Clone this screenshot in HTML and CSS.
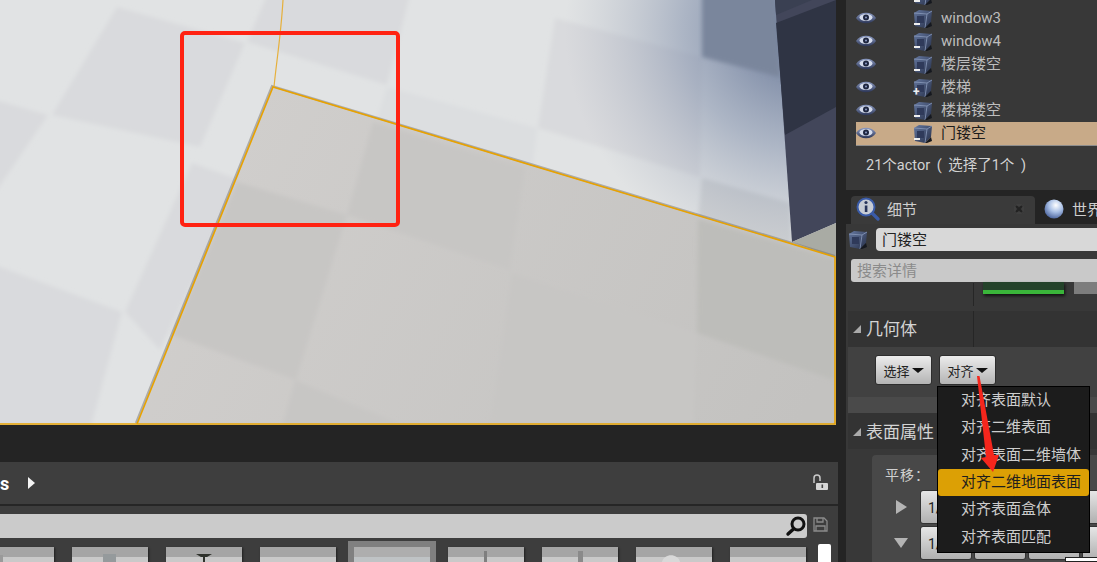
FILE: index.html
```html
<!DOCTYPE html>
<html lang="zh-CN">
<head>
    <meta charset="UTF-8">
    <meta name="viewport" content="width=device-width, initial-scale=1.0">
    <title>关卡编辑器</title>
    <link rel="stylesheet" href="styles.css">
</head>
<body>
    <svg class="defs" width="0" height="0">
        <defs>
            <linearGradient id="eye-fill" x1="0" y1="0" x2="0" y2="1">
                <stop offset="0" stop-color="#8d9cc4"/>
                <stop offset="1" stop-color="#2b3556"/>
            </linearGradient>
            <linearGradient id="cube-fill" x1="0" y1="0" x2="1" y2="1">
                <stop offset="0" stop-color="#64779f"/>
                <stop offset="1" stop-color="#262f48"/>
            </linearGradient>
            <symbol id="eye" viewBox="0 0 20 14">
                <path d="M0 7C4 0 16 0 20 7C16 14 4 14 0 7Z" fill="url(#eye-fill)"/>
                <ellipse cx="10" cy="6.5" rx="6.5" ry="3.4" fill="#d5dcec"/>
                <circle cx="10" cy="6.5" r="3" fill="#1f2740"/>
                <circle cx="10" cy="6.5" r="1" fill="#8d9cc4"/>
            </symbol>
            <symbol id="cube" viewBox="0 0 20 18">
                <path d="M1 3L6 0L19 1L18 12L12 18L2 16Z" fill="url(#cube-fill)"/>
                <path d="M1 3L14 4L19 1M14 4L12 18" fill="none" stroke="#8a9abb" stroke-width=".8"/>
                <rect x="4" y="6" width="7" height="7" fill="#2f3a5a"/>
                <path d="M12 18L18 12L19 16L14 18Z" fill="#15181f"/>
            </symbol>
        </defs>
    </svg>

    <div class="main">
        <div class="viewport">
            <svg class="scene" width="836" height="425" viewBox="0 0 836 425">
                <defs>
                    <filter id="soft" x="-5%" y="-5%" width="110%" height="110%">
                        <feGaussianBlur stdDeviation="2"/>
                    </filter>
                    <radialGradient id="wall-shade" gradientUnits="userSpaceOnUse" cx="800" cy="30" r="235">
                        <stop offset="0" stop-color="#5d6d8f" stop-opacity=".95"/>
                        <stop offset=".5" stop-color="#7888a6" stop-opacity=".5"/>
                        <stop offset="1" stop-color="#a0a8b8" stop-opacity="0"/>
                    </radialGradient>
                    <linearGradient id="floor-base" gradientUnits="userSpaceOnUse" x1="200" y1="100" x2="800" y2="420">
                        <stop offset="0" stop-color="#d1cfcd"/>
                        <stop offset="1" stop-color="#c3c2c0"/>
                    </linearGradient>
                </defs>

                <rect width="836" height="425" fill="#e1e3e4"/>
                <g filter="url(#soft)" fill="#d9dadd">
                    <polygon points="117,7 245,43 200,147 52,115"/>
                    <polygon points="-5,100 48,115 -5,193"/>
                    <polygon points="-5,265 122,312 90,430 -5,430"/>
                    <polygon points="192,163 240,180 160,350 125,312"/>
                    <polygon points="267,-5 247,42 387,85 410,-5"/>
                    <polygon points="387,87 537,128 533,165 375,125" fill="#dcdee0"/>
                    <polygon points="555,18 702,57 700,177 538,128"/>
                    <polygon points="702,178 790,203 792,245 698,220" fill="#cfd1d3"/>
                </g>
                <rect x="480" width="356" height="260" fill="url(#wall-shade)"/>
                <polygon points="702,-5 775,-5 780,77 702,57" fill="#7a869c" filter="url(#soft)"/>

                <polygon points="775,0 836,0 836,223 792,242" fill="#42465a"/>
                <polygon points="776,23 836,0 836,107 785,135" fill="#2f3444"/>
                <polygon points="775,0 812,0 776,15" fill="#3a4052"/>
                <polygon points="792,242 836,223 836,258" fill="#a9aba4"/>

                <polygon points="273,87 836,257 836,425 137,425" fill="url(#floor-base)"/>
                <g filter="url(#soft)" fill="#c7c6c4">
                    <polygon points="373,122 525,168 510,270 347,215"/>
                    <polygon points="237,182 347,215 296,380 172,335"/>
                    <polygon points="295,380 400,424 283,424"/>
                    <polygon points="512,273 697,333 693,424 490,424"/>
                    <polygon points="698,219 834,259 834,380 697,333" fill="#bdbdba"/>
                </g>
                <polyline points="137,424 273,87 836,257" fill="none" stroke="#77736c" stroke-width="2.2" transform="translate(-1 -1)" opacity=".5"/>
                <path d="M283 0C281 35 276 65 274 87" fill="none" stroke="#e6b03c" stroke-width="1.2"/>
                <polyline points="0,424 835,424 835,257 273,87 137,424" fill="none" stroke="#e8a200" stroke-width="1.6"/>
                <rect x="182" y="33" width="216" height="192" rx="3" fill="none" stroke="#ff2212" stroke-width="4"/>
            </svg>
        </div>

        <div class="toolbar">
            <span class="toolbar-title">s</span>
            <svg class="toolbar-arrow" width="7" height="12" viewBox="0 0 7 12"><path d="M0 0L7 6L0 12Z" fill="#f4f4f4"/></svg>
            <svg class="lock" width="18" height="18" viewBox="0 0 18 18">
                <path d="M3 9V4C3 0 9 0 9 4V7" fill="none" stroke="#c9c9c9" stroke-width="1.5"/>
                <rect x="5" y="9" width="12" height="7" rx="1" fill="#d6d6d6"/>
                <rect x="10.5" y="10.5" width="1.6" height="3.5" fill="#444"/>
            </svg>
        </div>

        <div class="asset-search">
            <div class="asset-input">
                <svg width="22" height="22" viewBox="0 0 22 22">
                    <circle cx="13" cy="9" r="6" fill="none" stroke="#111" stroke-width="3"/>
                    <path d="M8.5 14L3 19" stroke="#111" stroke-width="3.4" stroke-linecap="round"/>
                </svg>
            </div>
            <svg class="save" width="15" height="15" viewBox="0 0 15 15">
                <path d="M1 1H11L14 4V14H1Z" fill="none" stroke="#8a8a8a" stroke-width="1.3"/>
                <path d="M4 1V5H10V1M3 14V9H12V14" fill="none" stroke="#8a8a8a" stroke-width="1.3"/>
            </svg>
        </div>

        <div class="thumbs">
            <div class="thumb"><svg width="76" height="15"><rect x="7" y="8" width="7" height="7" fill="#8e8e8e"/><rect x="15" y="8" width="10" height="7" fill="#9a9a9a"/></svg></div>
            <div class="thumb"><svg width="76" height="15"><rect x="31" y="7" width="13" height="8" fill="#959a9c"/></svg></div>
            <div class="thumb"><svg width="76" height="15"><path d="M30 7H46L41 10H39V15H37V10H35Z" fill="#2f322c"/></svg></div>
            <div class="thumb"></div>
            <div class="thumb selected"></div>
            <div class="thumb"><svg width="76" height="15"><rect x="36" y="4" width="3" height="11" fill="#7f7f7f"/></svg></div>
            <div class="thumb"><svg width="76" height="15"><rect x="36" y="4" width="5" height="11" fill="#8a8a8a"/></svg></div>
            <div class="thumb"><svg width="76" height="15"><path d="M26 15C28 6 42 6 44 15Z" fill="#d8d8d8"/></svg></div>
            <div class="thumb"></div>
            <div class="scroll-thumb"></div>
        </div>
    </div>

    <div class="side">
        <div class="outliner">
            <div class="row"><svg class="eye"><use href="#eye"/></svg><svg class="cube"><use href="#cube"/></svg><span class="dash"></span></div>
            <div class="row"><svg class="eye"><use href="#eye"/></svg><svg class="cube"><use href="#cube"/></svg><span class="dash"></span><span class="row-name">window3</span></div>
            <div class="row"><svg class="eye"><use href="#eye"/></svg><svg class="cube"><use href="#cube"/></svg><span class="dash"></span><span class="row-name">window4</span></div>
            <div class="row"><svg class="eye"><use href="#eye"/></svg><svg class="cube"><use href="#cube"/></svg><span class="dash"></span><span class="row-name">楼层镂空</span></div>
            <div class="row"><svg class="eye"><use href="#eye"/></svg><svg class="cube"><use href="#cube"/></svg><span class="plus">+</span><span class="row-name">楼梯</span></div>
            <div class="row"><svg class="eye"><use href="#eye"/></svg><svg class="cube"><use href="#cube"/></svg><span class="dash"></span><span class="row-name">楼梯镂空</span></div>
            <div class="row row-selected"><svg class="eye"><use href="#eye"/></svg><svg class="cube"><use href="#cube"/></svg><span class="dash"></span><span class="row-name">门镂空</span></div>
            <div class="outliner-footer">21个actor ( 选择了1个 )</div>
        </div>

        <div class="tabs">
            <div class="tab tab-active">
                <svg width="24" height="24" viewBox="0 0 24 24">
                    <path d="M16 16L22 22" stroke="#3a5ba8" stroke-width="3.2" stroke-linecap="round"/>
                    <circle cx="10" cy="10" r="8.5" fill="#c6cbd4" stroke="#3a5ba8" stroke-width="2"/>
                    <circle cx="10" cy="5.5" r="1.6" fill="#27345c"/>
                    <rect x="8.8" y="8.5" width="2.6" height="6.5" fill="#27345c"/>
                </svg>
                <span>细节</span>
                <svg class="tab-close" width="10" height="10" viewBox="0 0 10 10"><path d="M1 1L9 9M9 1L1 9" stroke="#222" stroke-width="2"/><rect x="1" y="1" width="8" height="8" fill="none" stroke="#444"/></svg>
            </div>
            <div class="tab">
                <svg width="20" height="20" viewBox="0 0 20 20">
                    <defs><radialGradient id="globe" cx=".6" cy=".3" r=".8"><stop offset="0" stop-color="#ffffff"/><stop offset=".45" stop-color="#a9c0e6"/><stop offset="1" stop-color="#3a5390"/></radialGradient></defs>
                    <circle cx="10" cy="10" r="9.5" fill="url(#globe)"/>
                </svg>
                <span>世界</span>
            </div>
        </div>

        <div class="details">
            <div class="name-row">
                <svg class="cube name-cube"><use href="#cube"/></svg>
                <div class="name-input">门镂空</div>
            </div>
            <div class="search-details">搜索详情</div>

            <div class="cut-row">
                <div class="green-bar"></div>
                <div class="small-button"></div>
            </div>

            <div class="section-head">
                <span class="section-arrow"></span>
                <span class="section-title">几何体</span>
            </div>
            <div class="section-body">
                <button class="btn">选择<i class="caret"></i></button>
                <button class="btn">对齐<i class="caret"></i></button>
            </div>

            <div class="section-head section-head-surface">
                <span class="section-arrow"></span>
                <span class="section-title">表面属性</span>
            </div>
            <div class="surface">
                <div class="surface-label">平移：</div>
                <div class="pan-row">
                    <span class="tri-right"></span>
                    <div class="pan-btn">1/</div><div class="pan-btn"></div><div class="pan-btn"></div><div class="pan-btn"></div>
                </div>
                <div class="pan-row">
                    <span class="tri-down"></span>
                    <div class="pan-btn">1/</div><div class="pan-btn"></div><div class="pan-btn"></div><div class="pan-btn"></div>
                </div>
            </div>
            <div class="white-tip"></div>
        </div>

        <ul class="menu">
            <li>对齐表面默认</li>
            <li>对齐二维表面</li>
            <li>对齐表面二维墙体</li>
            <li class="menu-active">对齐二维地面表面</li>
            <li>对齐表面盒体</li>
            <li>对齐表面匹配</li>
        </ul>

        <svg class="red-arrow" width="30" height="100" viewBox="0 0 30 100">
            <polygon points="0,0 2.5,0 17,79 22,79 16,96 4,82 9,81" fill="#f5261c"/>
        </svg>
    </div>
</body>
</html>
```

FILE: styles.css
```css
* {
    box-sizing: border-box;
}
html, body {
    height: 100%;
}
body {
    margin: 0;
    display: flex;
    height: 562px;
    overflow: hidden;
    background-color: #242424;
    font-family: Roboto, "Noto Sans CJK SC", sans-serif;
    color: #cfcfcf;
}
.defs {
    position: absolute;
}

/* columna izquierda */
.main {
    width: 846px;
    flex-shrink: 0;
    display: flex;
    flex-direction: column;
    overflow: hidden;
}
.viewport {
    height: 425px;
}
.scene {
    display: block;
}
.toolbar {
    width: 838px;
    height: 42px;
    margin-top: 37px;
    background-color: #3e3e3e;
    display: flex;
    align-items: center;
    flex-shrink: 0;
}
.toolbar-title {
    font-size: 18px;
    font-weight: bold;
    color: #fff;
    width: 28px;
    line-height: 18px;
    margin-top: 2px;
}
.lock {
    margin-left: auto;
    margin-right: 9px;
}
.asset-search {
    width: 838px;
    height: 37px;
    border-top: 2px solid #262626;
    background-color: #3d3d3d;
    display: flex;
    padding-top: 8px;
    flex-shrink: 0;
}
.asset-input {
    width: 807px;
    height: 24px;
    background-color: #cbcbcb;
    border-radius: 0 3px 3px 0;
    display: flex;
    justify-content: flex-end;
    align-items: center;
}
.save {
    margin: 3px 0 0 6px;
}
.thumbs {
    width: 838px;
    flex: 1;
    background-color: #3d3d3d;
    display: flex;
    gap: 18px;
    padding-top: 6px;
    overflow: hidden;
}
.thumb {
    width: 76px;
    height: 30px;
    flex-shrink: 0;
    background: linear-gradient(#a5a5a5 10px, #c9c9c9 10px);
    box-shadow: 1px 1px 2px rgba(0,0,0,0.5);
}
.thumb:first-child {
    margin-left: -22px;
}
.thumb svg {
    display: block;
}
.thumb.selected {
    background: linear-gradient(#aeaeae 10px, #bfc3c5 10px);
    outline: 6px solid #808080;
}
.scroll-thumb {
    width: 13px;
    height: 30px;
    margin: -3px 0 0 -6px;
    background-color: #fff;
    border-radius: 2px 2px 0 0;
    flex-shrink: 0;
}

/* panel derecho */
.side {
    flex: 1;
    min-width: 0;
    position: relative;
    font-size: 15px;
}
.outliner {
    height: 190px;
    background-color: #383838;
    padding-left: 10px;
    display: flex;
    flex-direction: column;
    justify-content: flex-end;
    overflow: hidden;
}
.row {
    height: 23px;
    flex-shrink: 0;
    display: flex;
    align-items: center;
    position: relative;
    color: #bdbdbd;
}
.eye {
    width: 20px;
    height: 14px;
    margin-top: -2px;
}
.cube {
    width: 20px;
    height: 18px;
    margin-left: 37px;
    flex-shrink: 0;
}
.dash {
    position: absolute;
    left: 58px;
    bottom: 5px;
    width: 6px;
    height: 2px;
    background-color: #eee;
}
.plus {
    position: absolute;
    left: 57px;
    bottom: 1px;
    font-size: 12px;
    line-height: 12px;
    font-weight: bold;
    color: #eee;
}
.row-name {
    margin-left: 8px;
    line-height: 23px;
}
.row-selected {
    background-color: #c8aa88;
    color: #1c1c1c;
}
.outliner-footer {
    height: 45px;
    flex-shrink: 0;
    border-top: 1px solid #8d8d8d;
    padding: 10px 0 0 10px;
    font-size: 14.5px;
    line-height: 20px;
    word-spacing: 3px;
    color: #d2d2d2;
}
.tabs {
    height: 34px;
    padding: 6px 0 0 5px;
    display: flex;
    gap: 2px;
    background-color: #242424;
}
.tab {
    height: 28px;
    padding: 0 0 3px 7px;
    display: flex;
    align-items: center;
    gap: 8px;
    border-radius: 4px 4px 0 0;
    white-space: nowrap;
    overflow: hidden;
    flex: 1;
    min-width: 0;
}
.tab svg {
    flex-shrink: 0;
}
.tab-active {
    flex: 0 0 184px;
    background-color: #3a3a3a;
    padding-left: 5px;
    gap: 7px;
}
.tab-close {
    margin-left: auto;
    margin-right: 11px;
}
.details {
    height: 338px;
    background-color: #383838;
    overflow: hidden;
    position: relative;
}
.name-row {
    display: flex;
    align-items: flex-start;
    height: 31px;
    padding-top: 4px;
}
.name-cube {
    margin: 3px 0 0 2px;
}
.name-input {
    flex: 1;
    margin-left: 8px;
    height: 23px;
    line-height: 24px;
    padding-left: 6px;
    color: #222;
    background-color: #d8d8d8;
    border-radius: 4px 0 0 4px;
}
.search-details {
    margin: 4px 0 0 5px;
    height: 23px;
    line-height: 25px;
    padding-left: 6px;
    color: #8b8b8b;
    background-color: #c9c9c9;
    border-radius: 3px 0 0 3px;
}
.cut-row {
    height: 29px;
    margin-left: 2px;
    display: flex;
}
.cut-row::before {
    content: "";
    width: 1px;
    height: 23px;
    margin: 1px 0 0 125px;
    background-color: #262626;
    flex-shrink: 0;
}
.green-bar {
    width: 81px;
    height: 12px;
    margin-left: 9px;
    flex-shrink: 0;
    background: linear-gradient(#24422a 8px, #3ab53a 8px);
    box-shadow: 1px 2px 3px rgba(0,0,0,0.7);
}
.small-button {
    width: 40px;
    height: 12px;
    margin-left: 10px;
    flex-shrink: 0;
    background-color: #7d7d7d;
}
.section-head {
    height: 36px;
    margin-left: 2px;
    padding-bottom: 3px;
    display: flex;
    align-items: center;
    background: linear-gradient(to right, #333 125px, #262626 125px, #262626 126px, #333 126px);
}
.section-head-surface {
    background: #333;
    border-radius: 3px 0 0 0;
    padding-bottom: 1px;
}
.section-arrow {
    width: 0;
    height: 0;
    margin: 2px 0 0 5px;
    border-style: solid;
    border-width: 0 0 8px 8px;
    border-color: transparent transparent #aaa transparent;
}
.section-title {
    margin-left: 5px;
    font-size: 17px;
    color: #d4d4d4;
}
.section-body {
    height: 66px;
    margin-left: 2px;
    padding: 8px 0 0 27px;
    display: flex;
    gap: 7px;
    background: linear-gradient(#414141 50px, #4a4a4a 50px);
}
.btn {
    width: 57px;
    height: 30px;
    padding: 0;
    border: 1px solid #2d2d2d;
    border-radius: 3px;
    background: linear-gradient(#ececec, #b4b4b4);
    font-family: inherit;
    font-size: 13px;
    color: #222;
    display: flex;
    align-items: center;
    justify-content: center;
    gap: 2px;
}
.caret {
    width: 0;
    height: 0;
    border-style: solid;
    border-width: 5px 6px 0 6px;
    border-color: #111 transparent transparent transparent;
}
.surface {
    height: 120px;
    margin: 6px 0 0 26px;
    padding: 11px 0 0 13px;
    background-color: #484848;
    border-radius: 4px 0 0 0;
}
.surface-label {
    font-size: 14px;
    line-height: 18px;
    color: #d0d0d0;
    letter-spacing: 1px;
}
.pan-row {
    display: flex;
    align-items: center;
    gap: 2px;
    margin-top: 2px;
    position: relative;
    padding-left: 35px;
}
.surface-label + .pan-row {
    margin-top: 6px;
}
.pan-btn {
    width: 52px;
    height: 34px;
    flex-shrink: 0;
    padding-left: 7px;
    line-height: 34px;
    font-size: 14px;
    color: #222;
    background: linear-gradient(#e6e6e6, #b0b0b0);
    border: 1px solid #333;
    border-radius: 3px;
}
.tri-right {
    position: absolute;
    left: 11px;
    width: 0;
    height: 0;
    border-style: solid;
    border-width: 7px 0 7px 11px;
    border-color: transparent transparent transparent #b4b4b4;
}
.tri-down {
    position: absolute;
    left: 9px;
    width: 0;
    height: 0;
    border-style: solid;
    border-width: 10px 7px 0 7px;
    border-color: #b4b4b4 transparent transparent transparent;
}
.white-tip {
    position: absolute;
    left: 219px;
    bottom: 0;
    width: 40px;
    height: 5px;
    background-color: #fff;
    border: 1px solid #222;
}

/* menú desplegable */
.menu {
    position: absolute;
    left: 91px;
    top: 386px;
    width: 153px;
    height: 167px;
    margin: 0;
    padding: 0;
    list-style: none;
    background-color: #1c1c1c;
    border: 1px solid #000;
    display: flex;
    flex-direction: column;
}
.menu li {
    height: 27.33px;
    line-height: 27px;
    padding-left: 23px;
    color: #cdcdcd;
    white-space: nowrap;
}
.menu .menu-active {
    background-color: #dca005;
    color: #1e1e1e;
    border-radius: 3px;
}
.red-arrow {
    position: absolute;
    left: 131px;
    top: 376px;
}
```
